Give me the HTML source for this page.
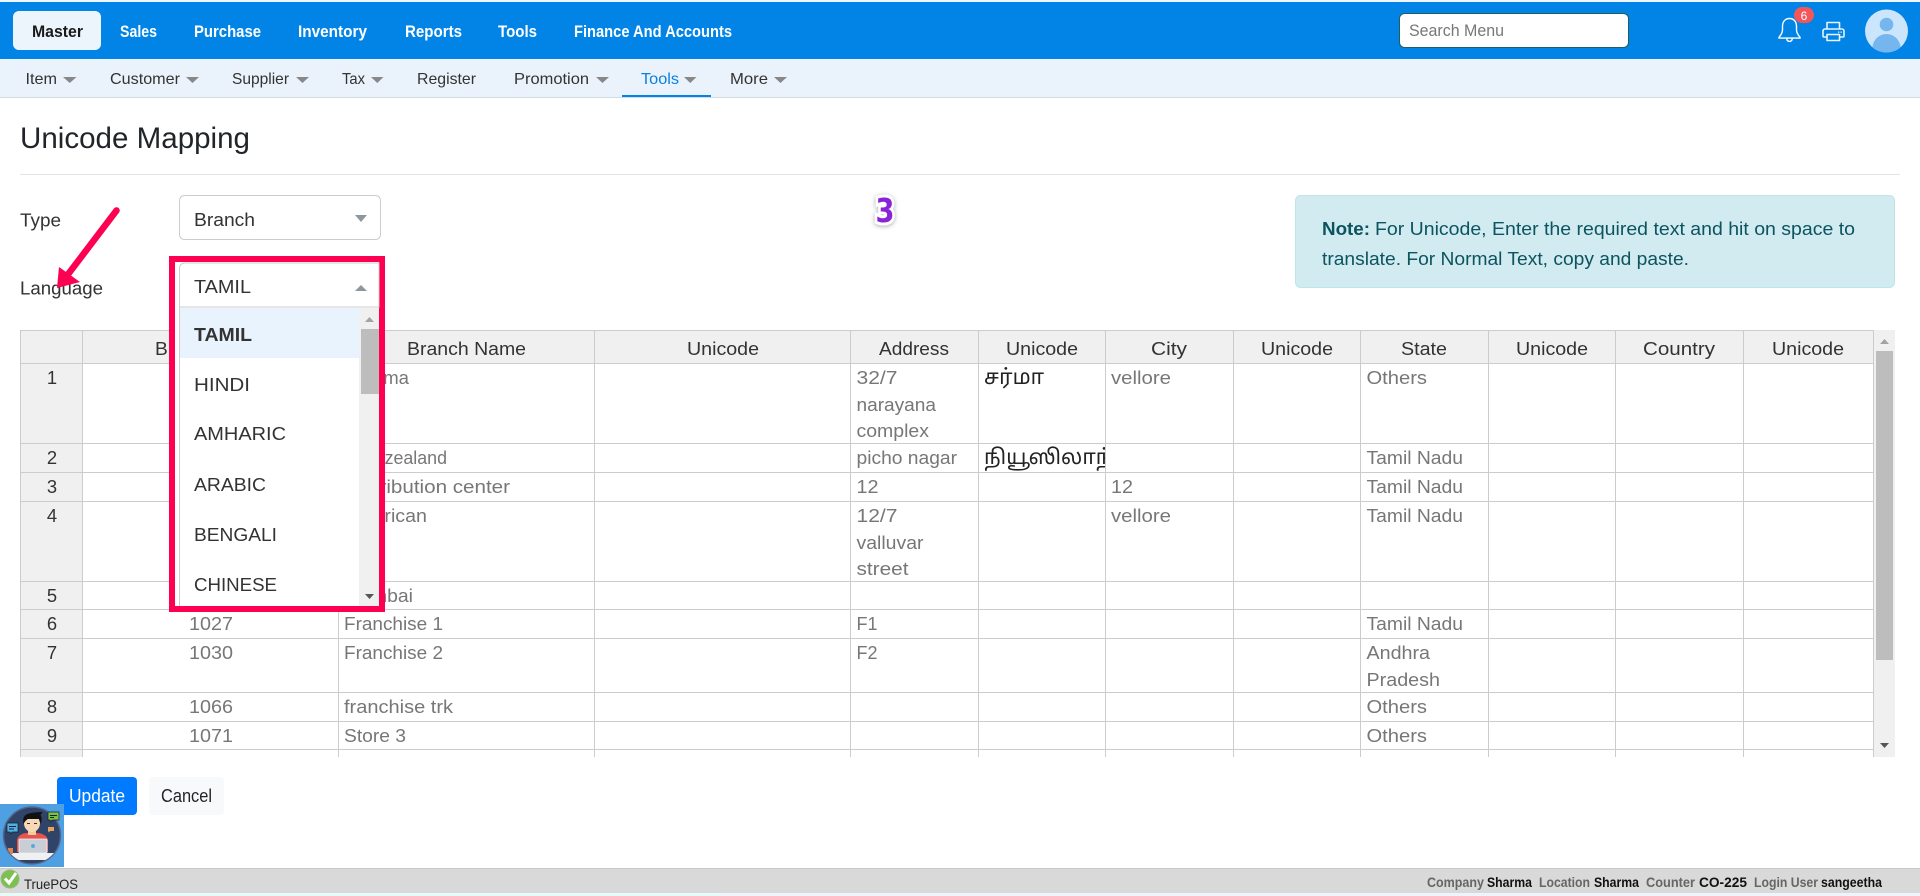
<!DOCTYPE html>
<html lang="en"><head><meta charset="utf-8"><title>Unicode Mapping</title>
<style>
html,body{margin:0;padding:0;width:1920px;height:896px;overflow:hidden;background:#fff}
svg{display:block}
text{font-family:"Liberation Sans",Arial,sans-serif;white-space:pre}
.nav{font-size:16.5px;font-weight:700;fill:#fff}
.sub{font-size:16px;fill:#333}
.car{fill:#888}
.h{font-size:18.4px;fill:#333}
.d{font-size:18.4px;fill:#777}
.n{font-size:18.4px;fill:#333}
.o{font-size:18.4px;fill:#333}
.ft{font-size:14px;font-weight:700;fill:#666}
.fv{font-size:14px;font-weight:700;fill:#111}
.ta{font-size:21px;fill:#222;font-family:"Liberation Sans","Noto Sans Tamil","Lohit Tamil","Noto Serif Tamil",sans-serif}
</style></head><body>
<svg xmlns="http://www.w3.org/2000/svg" width="1920" height="896" viewBox="0 0 1920 896">
<defs>
<clipPath id="c1"><rect x="979" y="444" width="126" height="28"/></clipPath>
<filter id="sh" x="-50%" y="-50%" width="200%" height="200%"><feDropShadow dx="0" dy="1" stdDeviation="2.5" flood-color="#888" flood-opacity=".7"/></filter>
</defs>
<rect width="1920" height="896" fill="#fff"/>
<!-- top nav -->
<rect y="0" width="1920" height="2" fill="#eef5fb"/>
<rect y="2" width="1920" height="57" fill="#0284e7"/>
<rect x="13" y="11" width="88" height="39" rx="6" fill="#edf5fc"/>
<text x="32" y="37" class="nav" style="fill:#1a1a1a" textLength="51" lengthAdjust="spacingAndGlyphs">Master</text>
<text x="120" y="37" class="nav" textLength="37" lengthAdjust="spacingAndGlyphs">Sales</text>
<text x="194" y="37" class="nav" textLength="67" lengthAdjust="spacingAndGlyphs">Purchase</text>
<text x="298" y="37" class="nav" textLength="69" lengthAdjust="spacingAndGlyphs">Inventory</text>
<text x="405" y="37" class="nav" textLength="57" lengthAdjust="spacingAndGlyphs">Reports</text>
<text x="498" y="37" class="nav" textLength="39" lengthAdjust="spacingAndGlyphs">Tools</text>
<text x="574" y="37" class="nav" textLength="158" lengthAdjust="spacingAndGlyphs">Finance And Accounts</text>
<rect x="1399.5" y="13.5" width="229" height="34" rx="5" fill="#fff" stroke="#1f5f63"/>
<text x="1409" y="36" style="font-size:16.5px;fill:#777" textLength="95" lengthAdjust="spacingAndGlyphs">Search Menu</text>
<!-- bell -->
<g fill="none" stroke="#fff" stroke-width="1.4" stroke-linejoin="round">
<path d="M1789.5 18.5c-4.6 0-7 3.6-7 7.8v3.6c0 3.4-2.1 5.6-3.6 7.6v.6h21.2v-.6c-1.500-2-3.600-4.200-3.600-7.600v-3.600c0-4.200-2.400-7.800-7-7.800z"/>
<path d="M1786.8 38.5c0 2 1.100 2.900 2.700 2.900s2.700-.9 2.700-2.900"/>
</g>
<rect x="1794" y="7" width="20" height="16" rx="8" fill="#f0565a"/>
<text x="1804" y="20" text-anchor="middle" style="font-size:12px;fill:#fff">6</text>
<!-- printer -->
<g fill="none" stroke="#e8f4ff" stroke-width="1.6" stroke-linejoin="round">
<path d="M1827 29v-6.500h12.500v6.500"/>
<path d="M1827 37h-3a1 1 0 0 1-1-1v-5a2 2 0 0 1 2-2h17a2 2 0 0 1 2 2v5a1 1 0 0 1-1 1h-3.500"/>
<rect x="1827" y="34.500" width="12.500" height="6"/>
</g>
<rect x="1838" y="31.500" width="1.300" height="1.300" fill="#e8f4ff"/><rect x="1840.500" y="31.500" width="1.300" height="1.300" fill="#e8f4ff"/>
<!-- avatar -->
<circle cx="1886.500" cy="31" r="21.500" fill="#cbe5fc"/>
<clipPath id="av"><circle cx="1886.500" cy="31" r="21.500"/></clipPath>
<circle cx="1886.500" cy="24.500" r="6.800" fill="#76b6ef"/>
<ellipse cx="1886.500" cy="48" rx="14" ry="14" fill="#76b6ef" clip-path="url(#av)"/>
<!-- sub nav -->
<rect y="59" width="1920" height="38" fill="#eaf3fb"/>
<rect y="97" width="1920" height="1" fill="#d3dbe3"/>
<text x="25.500" y="84" class="sub" textLength="31.500" lengthAdjust="spacingAndGlyphs">Item</text>
<path class="car" d="M63 77h13.500l-6.750 6z"/>
<text x="110" y="84" class="sub" textLength="70" lengthAdjust="spacingAndGlyphs">Customer</text>
<path class="car" d="M186 77h13l-6.500 6z"/>
<text x="232" y="84" class="sub" textLength="57" lengthAdjust="spacingAndGlyphs">Supplier</text>
<path class="car" d="M296 77h13l-6.500 6z"/>
<text x="342" y="84" class="sub" textLength="23" lengthAdjust="spacingAndGlyphs">Tax</text>
<path class="car" d="M371 77h12.500l-6.250 6z"/>
<text x="417" y="84" class="sub" textLength="59" lengthAdjust="spacingAndGlyphs">Register</text>
<text x="514" y="84" class="sub" textLength="75" lengthAdjust="spacingAndGlyphs">Promotion</text>
<path class="car" d="M596 77h13l-6.500 6z"/>
<text x="641" y="84" class="sub" style="fill:#0c7fe0" textLength="38" lengthAdjust="spacingAndGlyphs">Tools</text>
<path class="car" d="M684 77h12.500l-6.250 6z"/>
<rect x="622" y="95" width="89" height="2" fill="#0284e7"/>
<text x="730" y="84" class="sub" textLength="38" lengthAdjust="spacingAndGlyphs">More</text>
<path class="car" d="M774 77h13l-6.500 6z"/>
<!-- title -->
<text x="20" y="148" style="font-size:30px;fill:#212529" textLength="230" lengthAdjust="spacingAndGlyphs">Unicode Mapping</text>
<rect x="20" y="174" width="1880" height="1" fill="#e3e4e8"/>
<!-- form -->
<text x="20" y="226.500" class="o" textLength="41" lengthAdjust="spacingAndGlyphs">Type</text>
<rect x="179.500" y="195.500" width="201" height="44" rx="5" fill="#fff" stroke="#ccc"/>
<text x="194" y="226" class="o" textLength="61" lengthAdjust="spacingAndGlyphs">Branch</text>
<path d="M355 215h12l-6 7z" fill="#8e979f"/>
<text x="20" y="294.500" class="o" textLength="83" lengthAdjust="spacingAndGlyphs">Language</text>
<!-- note -->
<rect x="1295.500" y="195.500" width="599" height="92" rx="5" fill="#d1ebf0" stroke="#bee5eb"/>
<text x="1322" y="235" style="font-size:18.4px;font-weight:700;fill:#0c5460" textLength="48" lengthAdjust="spacingAndGlyphs">Note:</text>
<text x="1375" y="235" style="font-size:18.4px;fill:#0c5460" textLength="480" lengthAdjust="spacingAndGlyphs">For Unicode, Enter the required text and hit on space to</text>
<text x="1322" y="265" style="font-size:18.4px;fill:#0c5460" textLength="367" lengthAdjust="spacingAndGlyphs">translate. For Normal Text, copy and paste.</text>
<!-- 3 -->
<text x="885" y="222" text-anchor="middle" filter="url(#sh)" style="font-size:33px;font-weight:700;fill:#8a22d8;stroke:#fff;stroke-width:6px;paint-order:stroke;font-family:'DejaVu Sans',sans-serif" textLength="19" lengthAdjust="spacingAndGlyphs">3</text>
<!-- table backgrounds -->
<rect x="20" y="330" width="1854" height="33" fill="#f0f0f0"/>
<rect x="20" y="330" width="63" height="427" fill="#f0f0f0"/>
<!-- grid -->
<g fill="#ccc">
<rect x="20" y="330" width="1854" height="1"/><rect x="20" y="363" width="1854" height="1"/>
<rect x="20" y="443" width="1854" height="1"/><rect x="20" y="472" width="1854" height="1"/>
<rect x="20" y="501" width="1854" height="1"/><rect x="20" y="581" width="1854" height="1"/>
<rect x="20" y="609" width="1854" height="1"/><rect x="20" y="638" width="1854" height="1"/>
<rect x="20" y="692" width="1854" height="1"/><rect x="20" y="721" width="1854" height="1"/>
<rect x="20" y="749" width="1854" height="1"/>
<rect x="20" y="330" width="1" height="427"/><rect x="82" y="330" width="1" height="427"/>
<rect x="338" y="330" width="1" height="427"/><rect x="594" y="330" width="1" height="427"/>
<rect x="850" y="330" width="1" height="427"/><rect x="978" y="330" width="1" height="427"/>
<rect x="1105" y="330" width="1" height="427"/><rect x="1233" y="330" width="1" height="427"/>
<rect x="1360" y="330" width="1" height="427"/><rect x="1488" y="330" width="1" height="427"/>
<rect x="1615" y="330" width="1" height="427"/><rect x="1743" y="330" width="1" height="427"/>
<rect x="1873" y="330" width="1" height="427"/>
</g>
<!-- header text -->
<text x="155" y="355" class="h" textLength="112" lengthAdjust="spacingAndGlyphs">Branch Code</text>
<text x="407" y="355" class="h" textLength="119" lengthAdjust="spacingAndGlyphs">Branch Name</text>
<text x="687" y="355" class="h" textLength="72" lengthAdjust="spacingAndGlyphs">Unicode</text>
<text x="879" y="355" class="h" textLength="70" lengthAdjust="spacingAndGlyphs">Address</text>
<text x="1006" y="355" class="h" textLength="72" lengthAdjust="spacingAndGlyphs">Unicode</text>
<text x="1151" y="355" class="h" textLength="36" lengthAdjust="spacingAndGlyphs">City</text>
<text x="1261" y="355" class="h" textLength="72" lengthAdjust="spacingAndGlyphs">Unicode</text>
<text x="1401" y="355" class="h" textLength="46" lengthAdjust="spacingAndGlyphs">State</text>
<text x="1516" y="355" class="h" textLength="72" lengthAdjust="spacingAndGlyphs">Unicode</text>
<text x="1643" y="355" class="h" textLength="72" lengthAdjust="spacingAndGlyphs">Country</text>
<text x="1772" y="355" class="h" textLength="72" lengthAdjust="spacingAndGlyphs">Unicode</text>
<!-- row numbers -->
<g text-anchor="middle">
<text x="52" y="384" class="n">1</text><text x="52" y="464" class="n">2</text><text x="52" y="493" class="n">3</text>
<text x="52" y="522" class="n">4</text><text x="52" y="602" class="n">5</text><text x="52" y="630" class="n">6</text>
<text x="52" y="659" class="n">7</text><text x="52" y="713" class="n">8</text><text x="52" y="742" class="n">9</text>
</g>
<!-- codes -->
<text x="189" y="630" class="d" textLength="44" lengthAdjust="spacingAndGlyphs">1027</text>
<text x="189" y="659" class="d" textLength="44" lengthAdjust="spacingAndGlyphs">1030</text>
<text x="189" y="713" class="d" textLength="44" lengthAdjust="spacingAndGlyphs">1066</text>
<text x="189" y="742" class="d" textLength="44" lengthAdjust="spacingAndGlyphs">1071</text>
<!-- names -->
<text x="344" y="384" class="d" textLength="65" lengthAdjust="spacingAndGlyphs">Sharma</text>
<text x="344" y="464" class="d" textLength="103" lengthAdjust="spacingAndGlyphs">New zealand</text>
<text x="344" y="493" class="d" textLength="166" lengthAdjust="spacingAndGlyphs">Distribution center</text>
<text x="344" y="522" class="d" textLength="83" lengthAdjust="spacingAndGlyphs">American</text>
<text x="344" y="602" class="d" textLength="69" lengthAdjust="spacingAndGlyphs">Mumbai</text>
<text x="344" y="630" class="d" textLength="99" lengthAdjust="spacingAndGlyphs">Franchise 1</text>
<text x="344" y="659" class="d" textLength="99" lengthAdjust="spacingAndGlyphs">Franchise 2</text>
<text x="344" y="713" class="d" textLength="109" lengthAdjust="spacingAndGlyphs">franchise trk</text>
<text x="344" y="742" class="d" textLength="62" lengthAdjust="spacingAndGlyphs">Store 3</text>
<!-- address -->
<text x="856.500" y="384" class="d" textLength="41" lengthAdjust="spacingAndGlyphs">32/7</text>
<text x="856.500" y="411" class="d" textLength="79.500" lengthAdjust="spacingAndGlyphs">narayana</text>
<text x="856.500" y="437" class="d" textLength="72.500" lengthAdjust="spacingAndGlyphs">complex</text>
<text x="856.500" y="464" class="d" textLength="100.500" lengthAdjust="spacingAndGlyphs">picho nagar</text>
<text x="856.500" y="493" class="d" textLength="22" lengthAdjust="spacingAndGlyphs">12</text>
<text x="856.500" y="522" class="d" textLength="41" lengthAdjust="spacingAndGlyphs">12/7</text>
<text x="856.500" y="549" class="d" textLength="67" lengthAdjust="spacingAndGlyphs">valluvar</text>
<text x="856.500" y="575" class="d" textLength="52" lengthAdjust="spacingAndGlyphs">street</text>
<text x="856.500" y="630" class="d" textLength="21" lengthAdjust="spacingAndGlyphs">F1</text>
<text x="856.500" y="659" class="d" textLength="21" lengthAdjust="spacingAndGlyphs">F2</text>
<!-- tamil -->
<text x="984" y="384" class="ta">சர்மா</text>
<text x="984" y="464" class="ta" clip-path="url(#c1)">நியூஸிலாந்து</text>
<!-- city -->
<text x="1111" y="384" class="d" textLength="60" lengthAdjust="spacingAndGlyphs">vellore</text>
<text x="1111" y="493" class="d" textLength="22" lengthAdjust="spacingAndGlyphs">12</text>
<text x="1111" y="522" class="d" textLength="60" lengthAdjust="spacingAndGlyphs">vellore</text>
<!-- state -->
<text x="1366.500" y="384" class="d" textLength="60.500" lengthAdjust="spacingAndGlyphs">Others</text>
<text x="1366.500" y="464" class="d" textLength="96.500" lengthAdjust="spacingAndGlyphs">Tamil Nadu</text>
<text x="1366.500" y="493" class="d" textLength="96.500" lengthAdjust="spacingAndGlyphs">Tamil Nadu</text>
<text x="1366.500" y="522" class="d" textLength="96.500" lengthAdjust="spacingAndGlyphs">Tamil Nadu</text>
<text x="1366.500" y="630" class="d" textLength="96.500" lengthAdjust="spacingAndGlyphs">Tamil Nadu</text>
<text x="1366.500" y="659" class="d" textLength="63.500" lengthAdjust="spacingAndGlyphs">Andhra</text>
<text x="1366.500" y="686" class="d" textLength="73.500" lengthAdjust="spacingAndGlyphs">Pradesh</text>
<text x="1366.500" y="713" class="d" textLength="60.500" lengthAdjust="spacingAndGlyphs">Others</text>
<text x="1366.500" y="742" class="d" textLength="60.500" lengthAdjust="spacingAndGlyphs">Others</text>
<!-- table scrollbar -->
<rect x="1874" y="330" width="21" height="427" fill="#f0f0f0"/>
<rect x="1876" y="351" width="17" height="309" fill="#bdbdbd"/>
<path d="M1880 344h9l-4.500-5z" fill="#a3a3a3"/>
<path d="M1880 743h9l-4.500 5z" fill="#555"/>
<!-- red box -->
<rect x="172" y="259" width="210" height="350" fill="#fff" stroke="#fe0052" stroke-width="6"/>
<!-- language select -->
<path d="M179.500 306V268a5 5 0 0 1 5-5H379v44H179.500z" fill="#fff" stroke="#ccc"/>
<rect x="179" y="307" width="1" height="299" fill="#ccc"/>
<rect x="180" y="308" width="179" height="298" fill="#fff"/>
<text x="194" y="293" class="o" textLength="57" lengthAdjust="spacingAndGlyphs">TAMIL</text>
<path d="M355 291h12l-6-6z" fill="#8e979f"/>
<rect x="180" y="308" width="179" height="50" fill="#e8f3fd"/>
<text x="194" y="341" class="o" style="font-weight:700" textLength="58" lengthAdjust="spacingAndGlyphs">TAMIL</text>
<text x="194" y="391" class="o" textLength="56" lengthAdjust="spacingAndGlyphs">HINDI</text>
<text x="194" y="440" class="o" textLength="92" lengthAdjust="spacingAndGlyphs">AMHARIC</text>
<text x="194" y="491" class="o" textLength="72" lengthAdjust="spacingAndGlyphs">ARABIC</text>
<text x="194" y="541" class="o" textLength="83" lengthAdjust="spacingAndGlyphs">BENGALI</text>
<text x="194" y="591" class="o" textLength="83" lengthAdjust="spacingAndGlyphs">CHINESE</text>
<rect x="359" y="308" width="20" height="298" fill="#f0f0f0"/>
<rect x="361" y="329" width="18" height="65" fill="#bdbdbd"/>
<path d="M365 322h9l-4.500-5z" fill="#a3a3a3"/>
<path d="M365 594h9l-4.500 5z" fill="#555"/>
<!-- arrow -->
<path d="M116.500 210.500L66 277" stroke="#fe0052" stroke-width="6.500" stroke-linecap="round" fill="none"/>
<path d="M59 267L80 282L57 288z" fill="#fe0052"/>
<!-- buttons -->
<rect x="57" y="777" width="80" height="38" rx="4" fill="#007bff"/>
<text x="69" y="802" class="o" style="fill:#fff" textLength="56" lengthAdjust="spacingAndGlyphs">Update</text>
<rect x="149" y="777" width="75" height="38" rx="4" fill="#f8f9fa"/>
<text x="161" y="802" class="o" style="fill:#212529" textLength="51" lengthAdjust="spacingAndGlyphs">Cancel</text>
<!-- support avatar -->
<rect x="0" y="804" width="64" height="63" fill="#4f9fe3"/>
<circle cx="32" cy="835.500" r="28.500" fill="#2f4468" stroke="#56678a" stroke-width="1.500"/>
<clipPath id="cc"><circle cx="32" cy="835.500" r="28"/></clipPath>
<g clip-path="url(#cc)">
<rect x="4" y="853" width="56" height="7" fill="#eef0f2"/>
<rect x="8" y="848" width="5" height="6" fill="#e0834d"/>
<path d="M17 852v-11c0-5 5-8 10-8h10c5 0 11 3 11 8v11z" fill="#e8534c"/>
<rect x="28" y="827" width="8" height="8" fill="#f2c9a0"/>
<ellipse cx="32" cy="823.500" rx="8" ry="8.500" fill="#f7d9b8"/>
<path d="M23.500 824c-1.500-7 2-10 6-10.500 2-1 10-1.500 13-1.500l-2 3c1.500 2 1.500 5 0 9l-1.500-5h-11c-2 1-3.500 3-4.500 5z" fill="#111"/>
<rect x="27" y="823" width="3" height="1" fill="#333"/><rect x="34" y="823" width="3" height="1" fill="#333"/>
<rect x="19" y="839" width="28" height="14" rx="1" fill="#c9ced6" stroke="#eef0f2" stroke-width=".8"/>
<circle cx="33" cy="846" r="2" fill="#5aa7e0"/>
</g>
<path d="M7 823h11v9h-6l-1 2-1-2h-3z" fill="#4fb0e6" stroke="#16202f" stroke-width=".7"/>
<rect x="9" y="826" width="7" height="1" fill="#16202f"/><rect x="9" y="828.500" width="5" height="1" fill="#16202f"/>
<path d="M48 812h11v8h-7l-1 2-1-2h-2z" fill="#7cc242" stroke="#16202f" stroke-width=".7"/>
<rect x="50" y="815" width="7" height="1" fill="#16202f"/><rect x="50" y="817" width="4" height="1" fill="#16202f"/>
<path d="M48 827h6v4h-4l-1 1.500-1-1.500z" fill="#e8a25a"/>
<!-- footer -->
<rect y="868" width="1920" height="25" fill="#d9d9d9"/>
<rect y="868" width="1920" height="1" fill="#c8c8c8"/>
<rect y="893" width="720" height="3" fill="#e6fbf7"/>
<rect x="720" y="893" width="1200" height="3" fill="#f0f3fb"/>
<circle cx="10" cy="879" r="9" fill="#7cc14f" stroke="#9ab98a"/>
<path d="M5 878.500l4 4.500 7-10" fill="none" stroke="#fff" stroke-width="3"/>
<text x="24" y="889" style="font-size:14px;fill:#222" textLength="54" lengthAdjust="spacingAndGlyphs">TruePOS</text>
<text x="1427" y="887" class="ft" textLength="57" lengthAdjust="spacingAndGlyphs">Company</text>
<text x="1487" y="887" class="fv" textLength="45" lengthAdjust="spacingAndGlyphs">Sharma</text>
<text x="1539" y="887" class="ft" textLength="51" lengthAdjust="spacingAndGlyphs">Location</text>
<text x="1594" y="887" class="fv" textLength="45" lengthAdjust="spacingAndGlyphs">Sharma</text>
<text x="1646" y="887" class="ft" textLength="49" lengthAdjust="spacingAndGlyphs">Counter</text>
<text x="1699" y="887" class="fv" textLength="48" lengthAdjust="spacingAndGlyphs">CO-225</text>
<text x="1754" y="887" class="ft" textLength="64" lengthAdjust="spacingAndGlyphs">Login User</text>
<text x="1821" y="887" class="fv" textLength="61" lengthAdjust="spacingAndGlyphs">sangeetha</text>
</svg>
</body></html>
